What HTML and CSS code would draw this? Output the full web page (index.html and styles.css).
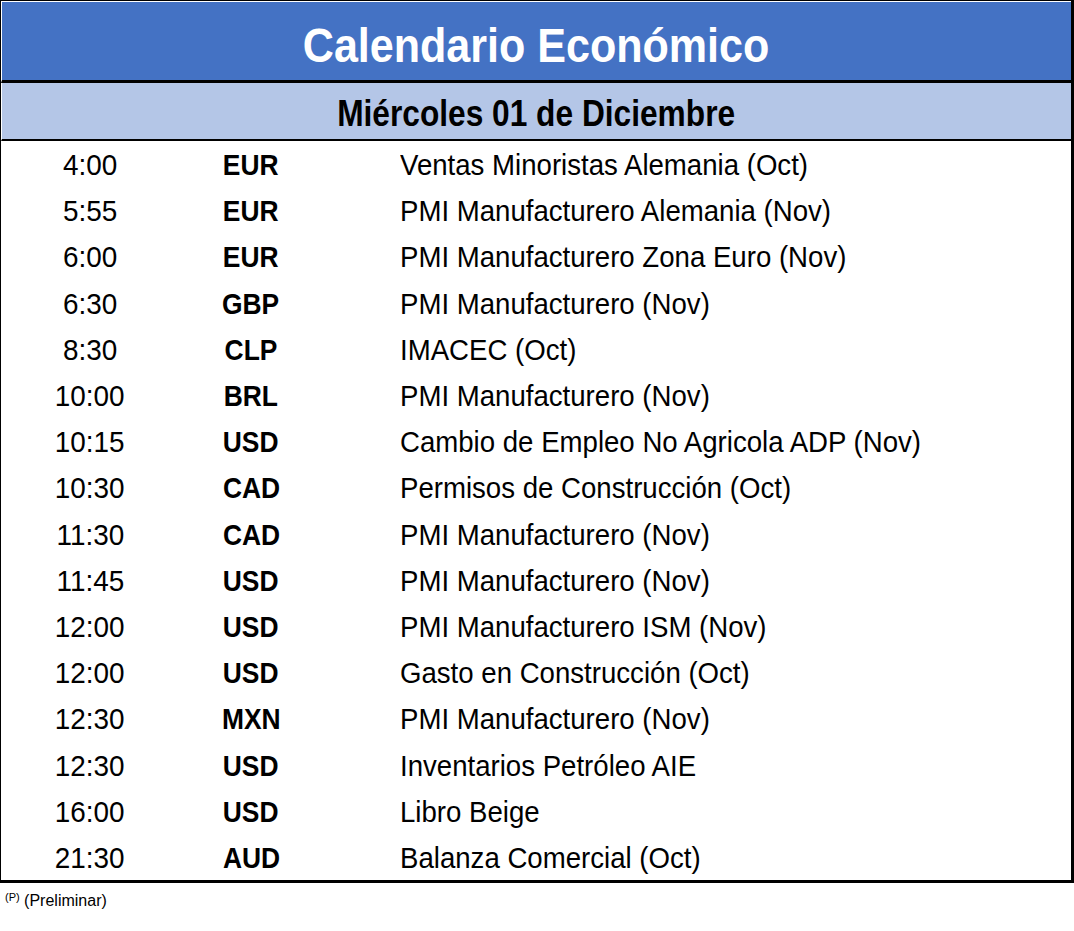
FILE: index.html
```html
<!DOCTYPE html>
<html lang="es">
<head>
<meta charset="utf-8">
<title>Calendario Económico</title>
<link rel="stylesheet" href="styles.css">
</head>
<body>
<div class="sheet">
  <div class="title"><span class="squeeze">Calendario Económico</span></div>
  <div class="date"><span class="squeeze">Miércoles 01 de Diciembre</span></div>
  <div class="rows">
    <div class="row"><span class="time">4:00</span><span class="cur">EUR</span><span class="desc">Ventas Minoristas Alemania (Oct)</span></div>
    <div class="row"><span class="time">5:55</span><span class="cur">EUR</span><span class="desc">PMI Manufacturero Alemania (Nov)</span></div>
    <div class="row"><span class="time">6:00</span><span class="cur">EUR</span><span class="desc">PMI Manufacturero Zona Euro (Nov)</span></div>
    <div class="row"><span class="time">6:30</span><span class="cur">GBP</span><span class="desc">PMI Manufacturero (Nov)</span></div>
    <div class="row"><span class="time">8:30</span><span class="cur">CLP</span><span class="desc">IMACEC (Oct)</span></div>
    <div class="row"><span class="time">10:00</span><span class="cur">BRL</span><span class="desc">PMI Manufacturero (Nov)</span></div>
    <div class="row"><span class="time">10:15</span><span class="cur">USD</span><span class="desc">Cambio de Empleo No Agricola ADP (Nov)</span></div>
    <div class="row"><span class="time">10:30</span><span class="cur">CAD</span><span class="desc">Permisos de Construcción (Oct)</span></div>
    <div class="row"><span class="time">11:30</span><span class="cur">CAD</span><span class="desc">PMI Manufacturero (Nov)</span></div>
    <div class="row"><span class="time">11:45</span><span class="cur">USD</span><span class="desc">PMI Manufacturero (Nov)</span></div>
    <div class="row"><span class="time">12:00</span><span class="cur">USD</span><span class="desc">PMI Manufacturero ISM (Nov)</span></div>
    <div class="row"><span class="time">12:00</span><span class="cur">USD</span><span class="desc">Gasto en Construcción (Oct)</span></div>
    <div class="row"><span class="time">12:30</span><span class="cur">MXN</span><span class="desc">PMI Manufacturero (Nov)</span></div>
    <div class="row"><span class="time">12:30</span><span class="cur">USD</span><span class="desc">Inventarios Petróleo AIE</span></div>
    <div class="row"><span class="time">16:00</span><span class="cur">USD</span><span class="desc">Libro Beige</span></div>
    <div class="row"><span class="time">21:30</span><span class="cur">AUD</span><span class="desc">Balanza Comercial (Oct)</span></div>
  </div>
</div>
<p class="note"><sup>(P)</sup> (Preliminar)</p>
</body>
</html>
```
FILE: styles.css
```css
html, body {
  margin: 0;
  padding: 0;
  background: #ffffff;
}

body {
  font-family: "Liberation Sans", Arial, sans-serif;
  color: #000;
}

.sheet {
  width: 1070px;
  border-style: solid;
  border-color: #000;
  border-width: 1px 3px 3px 1px;
}

.title,
.date {
  box-sizing: border-box;
  display: flex;
  align-items: center;
  justify-content: center;
  font-weight: bold;
  line-height: 1;
  border-left: 1px solid #fff;
}

.title {
  height: 82px;
  padding-top: 9px;
  background: #4472c4;
  border-top: 1px solid #fff;
  border-bottom: 3px solid #000;
  color: #fff;
  font-size: 48px;
}

.title .squeeze {
  transform: scaleX(0.897);
}

.date {
  height: 58px;
  padding-top: 5px;
  background: #b4c6e7;
  border-bottom: 2px solid #000;
  font-size: 36px;
}

.date .squeeze {
  transform: scaleX(0.88);
}

.squeeze {
  display: inline-block;
  white-space: nowrap;
  transform-origin: center;
}

.rows {
  height: 739px;
  display: grid;
  grid-template-rows: repeat(16, 1fr);
}

.row {
  display: grid;
  grid-template-columns: 178px 144px 1fr;
  align-items: center;
  font-size: 30px;
  line-height: 1;
  padding-top: 2px;
}

.row > span {
  white-space: nowrap;
}

.time {
  justify-self: center;
  transform: scaleX(0.93);
}

.cur {
  justify-self: center;
  font-weight: bold;
  transform: scaleX(0.88);
}

.desc {
  justify-self: start;
  margin-left: 77px;
  transform: scaleX(0.92);
  transform-origin: left center;
}

.note {
  margin: 9px 0 0;
  padding-left: 5px;
  font-size: 16px;
  line-height: 18px;
}

.note sup {
  font-size: 11px;
  vertical-align: 5px;
  line-height: 0;
}
```
